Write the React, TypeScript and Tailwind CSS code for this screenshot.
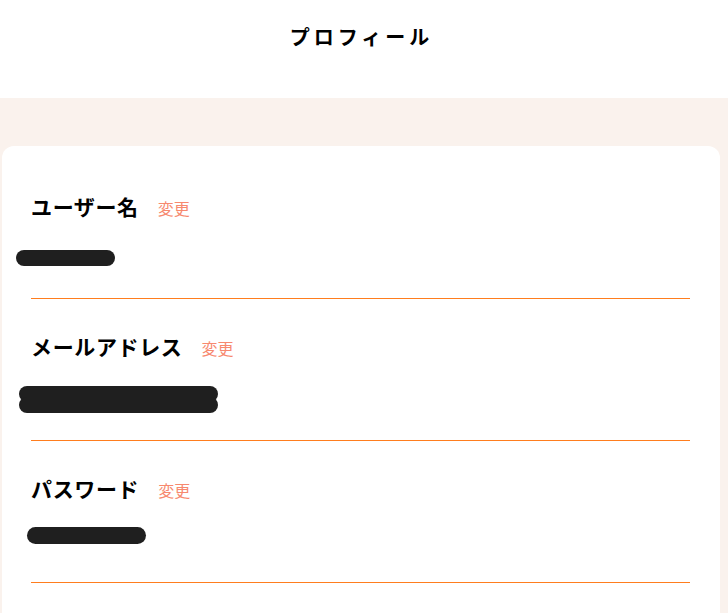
import React from 'react';

const font = { fontFamily: '"Noto Sans CJK JP", "Noto Sans", sans-serif' };

type Item = {
  label: string;
  blobs: string[];
  area: string;
};

const items: Item[] = [
  { label: 'ユーザー名', blobs: ['ml-[14px] w-[99px] h-[16px]'], area: 'h-[78px] pt-[30px]' },
  {
    label: 'メールアドレス',
    blobs: ['ml-[17px] w-[199px] h-[16px]', 'ml-[17px] -mt-[5px] w-[199px] h-[16px]'],
    area: 'h-[80px] pt-[26px]',
  },
  { label: 'パスワード', blobs: ['ml-[25px] w-[119px] h-[17px]'], area: 'h-[80px] pt-[25px]' },
];

function Row({ item, first }: { item: Item; first: boolean }) {
  return (
    <div className={first ? 'pt-[34px]' : 'pt-[33px]'}>
      {/* Label + change link */}
      <div className="flex h-7 items-center pl-[29px]">
        <span className="text-[21px] font-bold leading-7 tracking-[0.03em] text-black">{item.label}</span>
        <button className="ml-[19px] mt-1 text-[16px] leading-6 text-[#f7896f]">変更</button>
      </div>

      {/* Redacted value */}
      <div className={item.area}>
        {item.blobs.map((b, i) => (
          <div key={i} className={`${b} rounded-full bg-[#1f1f1f]`} />
        ))}
      </div>

      <div className="ml-[29px] mr-[30px] border-t border-[#ff7d1e]" />
    </div>
  );
}

export default function App() {
  return (
    <div className="min-h-screen bg-[#faf2ed]" style={font}>
      <header className="flex h-[98px] justify-center bg-white pt-[23px] pr-[5px]">
        <h1 className="text-[20px] font-bold leading-7 tracking-[0.2em] text-black">プロフィール</h1>
      </header>

      <div className="pt-12">
        <div className="ml-[2px] mr-[8px] rounded-t-[12px] bg-white pt-3 pb-10">
          {items.map((item, i) => (
            <Row key={item.label} item={item} first={i === 0} />
          ))}
        </div>
      </div>
    </div>
  );
}
